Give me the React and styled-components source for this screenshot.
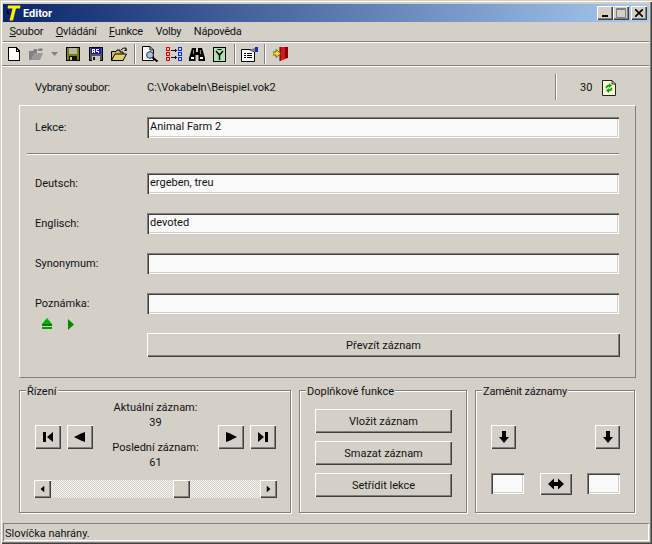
import React from "react";
import styled, { createGlobalStyle } from "styled-components";

const Global = createGlobalStyle`
  html, body { margin: 0; padding: 0; background: #d4d0c8; }
  * { box-sizing: border-box; }
  body { font-family: Roboto, "Liberation Sans", Arial, sans-serif; font-size: 11px; color: #111; }
`;

const FACE = "#d4d0c8";

const Window = styled.div`
  width: 652px;
  height: 544px;
  background: ${FACE};
  display: flex;
  flex-direction: column;
  padding: 4px 3px 3px 3px;
  box-shadow: inset 1px 1px 0 ${FACE}, inset 2px 2px 0 #fff, inset -1px -1px 0 #404040, inset -2px -2px 0 #808080;
`;

const TitleBar = styled.div`
  height: 18px;
  flex: none;
  display: flex;
  align-items: center;
  padding: 0 2px 0 2px;
  background: linear-gradient(90deg, #0a246a, #a6caf0);
  color: #fff;
  font-weight: bold;
  font-size: 11px;
`;

const TitleText = styled.span`
  margin-left: 2px;
  flex: 1;
`;

const CaptionButton = styled.div`
  width: 16px;
  height: 14px;
  margin-left: ${p => p.$gap || 0}px;
  background: ${FACE};
  box-shadow: inset 1px 1px 0 #fff, inset -1px -1px 0 #404040, inset -2px -2px 0 #808080;
  display: flex;
  align-items: center;
  justify-content: center;
`;

const MenuBar = styled.div`
  height: 20px;
  flex: none;
  display: flex;
  align-items: center;
  border-bottom: 1px solid #808080;
`;

const MenuItem = styled.span`
  padding: 0 6px 0 6.5px;
  font-size: 11px;
  letter-spacing: -0.22px;
  u { text-decoration: underline; }
`;

const ToolBar = styled.div`
  height: 24px;
  flex: none;
  display: flex;
  align-items: center;
  margin-left: -1px;
  border-top: 1px solid #fff;
  border-bottom: 1px solid #808080;
  box-shadow: 0 1px 0 #fff;
`;

const ToolButton = styled.div`
  width: ${p => p.$w || 23}px;
  height: 22px;
  flex: none;
  display: flex;
  align-items: center;
  justify-content: center;
`;

const ToolSep = styled.div`
  width: ${p => p.$w}px;
  height: 20px;
  flex: none;
  display: flex;
  justify-content: center;
  &::before {
    content: "";
    width: 2px;
    height: 100%;
    background: linear-gradient(90deg, #808080 50%, #fff 50%);
  }
`;

const Body = styled.div`
  flex: 1;
  display: flex;
  flex-direction: column;
  padding: 0 13px 0 16px;
`;

const InfoRow = styled.div`
  height: 39px;
  flex: none;
  display: flex;
  align-items: center;
  padding-top: 4px;
`;

const InfoLabel = styled.span`
  width: 112px;
  margin-left: 16px;
  letter-spacing: -0.25px;
`;

const InfoPath = styled.span`
  flex: 1;
`;

const InfoDivider = styled.div`
  width: 2px;
  height: 26px;
  margin-top: -2px;
  background: linear-gradient(90deg, #808080 50%, #fff 50%);
`;

const InfoCount = styled.span`
  margin-left: 23px;
  width: 22px;
`;

const InfoIcon = styled.div`
  width: 34px;
  display: flex;
`;

const LessonPanel = styled.div`
  height: 273px;
  flex: none;
  border-top: 1px solid #fff;
  border-left: 1px solid #fff;
  border-right: 1px solid #808080;
  border-bottom: 1px solid #808080;
  padding: 11px 16px 0 15px;
  display: flex;
  flex-direction: column;
`;

const FieldRow = styled.div`
  display: grid;
  grid-template-columns: 112px 1fr;
  align-items: center;
  height: 21px;
  margin-bottom: ${p => p.$mb ?? 19}px;
`;

const TextInput = styled.div`
  height: ${p => p.$h || 21}px;
  width: ${p => p.$w ? p.$w + "px" : "auto"};
  background: #f9f9f9;
  padding: 3px 0 0 3px;
  font-size: 11px;
  box-shadow: inset 1px 1px 0 #808080, inset 2px 2px 0 #404040, inset -1px -1px 0 #fff, inset -2px -2px 0 ${FACE};
`;

const Rule = styled.div`
  height: 2px;
  margin: 15px 0 18px -8px;
  background: linear-gradient(180deg, #808080 50%, #fff 50%);
`;

const MarkerRow = styled.div`
  height: 14px;
  margin-top: -16px;
  display: flex;
  align-items: center;
  gap: 16px;
  padding-left: 7px;
  flex: none;
`;

const Button = styled.div`
  width: ${p => p.$w ? p.$w + "px" : "auto"};
  height: ${p => p.$h || 24}px;
  flex: none;
  background: ${FACE};
  display: flex;
  align-items: center;
  justify-content: center;
  box-shadow: inset 1px 1px 0 #fff, inset -1px -1px 0 #404040, inset -2px -2px 0 #808080;
`;

const WideButtonRow = styled.div`
  margin: 2px -1px 0 112px;
`;

const Groups = styled.div`
  margin-top: 12px;
  display: flex;
  gap: 8px;
  height: 123px;
`;

const Group = styled.div`
  position: relative;
  width: ${p => p.$w}px;
  height: 123px;
  flex: none;
  border: 1px solid #808080;
  box-shadow: 1px 1px 0 #fff, inset 1px 1px 0 #fff;
  padding: ${p => p.$pad};
`;

const Legend = styled.span`
  position: absolute;
  left: 6px;
  top: -6px;
  padding: 0 1px;
  background: ${FACE};
  line-height: 13px;
  letter-spacing: ${p => p.$tight ? "-0.2px" : "0"};
`;

const NavRow = styled.div`
  display: flex;
  align-items: flex-start;
  height: 80px;
`;

const NavPair = styled.div`
  display: flex;
  gap: 6px;
  margin-top: 25px;
`;

const Readout = styled.div`
  flex: 1;
  text-align: center;
  line-height: 15px;
`;

const ReadoutValue = styled.div`
  margin-bottom: 10px;
  &:last-child { margin-bottom: 0; }
`;

const ScrollBar = styled.div`
  height: 18px;
  width: 243px;
  margin-left: -1px;
  display: flex;
  background: repeating-conic-gradient(#f4f3f0 0 25%, ${FACE} 0 50%) 0 0 / 2px 2px;
`;

const ScrollKnob = styled(Button)`
  margin-left: ${p => p.$ml || 0}px;
`;

const Track = styled.div`
  flex: 1;
  display: flex;
`;

const FuncStack = styled.div`
  display: flex;
  flex-direction: column;
  gap: 8px;
`;

const SwapRow = styled.div`
  display: flex;
  justify-content: space-between;
  align-items: flex-start;
  margin-bottom: ${p => p.$mb || 0}px;
`;

const StatusBar = styled.div`
  height: 18px;
  flex: none;
  margin-top: 10px;
  padding: 4px 0 0 2px;
  box-shadow: inset 1px 1px 0 #808080, inset -1px -1px 0 #fff;
  font-size: 11px;
`;

const Logo = () => (
  <svg width="16" height="16" viewBox="0 0 16 16">
    <path d="M2.5 3L4 9H2Z M3 3H2V9" fill="#000" />
    <path d="M3 0.5H15.5L15 3.5H11L8 15.5H4.5L7.5 3.5H2.5Z" fill="#ffef00" />
  </svg>
);

const Px = ({ w, h, children, style }) => (
  <svg width={w} height={h} viewBox={`0 0 ${w} ${h}`} shapeRendering="crispEdges" style={style}>{children}</svg>
);

const NewIcon = () => (
  <Px w={12} h={14}>
    <path d="M.5.5H8L11.5 4V13.5H.5Z" fill="#fff" stroke="#000" />
    <path d="M8 .5V4H11.5" fill="none" stroke="#000" />
  </Px>
);

const OpenGreyIcon = () => (
  <svg width="17" height="14" viewBox="0 0 17 14">
    <path d="M1 4H5L6 2H9V13H1Z" fill="#808080" />
    <path d="M3 13L6 6H15L12 13Z" fill="#9a9a9a" />
    <path d="M9 3Q12 0 15 2L14 4H11Z" fill="#808080" />
  </svg>
);

const Caret = ({ color = "#808080", rotate = 0 }) => (
  <svg width="7" height="4" viewBox="0 0 7 4" style={rotate ? { transform: `rotate(${rotate}deg)` } : undefined}>
    <path d="M0 0H7L3.5 4Z" fill={color} />
  </svg>
);

const SaveIcon = () => (
  <Px w={14} h={14}>
    <rect width="14" height="14" fill="#000" />
    <rect x="1" y="1" width="12" height="12" fill="#808000" />
    <rect x="3" y="1" width="8" height="6" fill="#b8b8a8" />
    <rect x="3" y="9" width="8" height="5" fill="#111" />
    <rect x="4" y="10" width="2" height="3" fill="#c8c8c0" />
  </Px>
);

const SaveAsIcon = () => (
  <Px w={14} h={14}>
    <rect width="14" height="14" fill="#000" />
    <rect x="1" y="1" width="12" height="12" fill="#555" />
    <rect x="2" y="1" width="10" height="6" fill="#1818d0" />
    <rect x="3" y="2" width="1" height="4" fill="#fff" />
    <rect x="5" y="2" width="1" height="4" fill="#fff" />
    <rect x="4" y="2" width="1" height="1" fill="#fff" />
    <rect x="4" y="4" width="1" height="1" fill="#fff" />
    <rect x="7" y="2" width="3" height="1" fill="#fff" />
    <rect x="7" y="3" width="1" height="1" fill="#fff" />
    <rect x="7" y="4" width="3" height="1" fill="#fff" />
    <rect x="9" y="5" width="1" height="1" fill="#fff" />
    <rect x="3" y="9" width="8" height="5" fill="#c8c8c0" />
    <rect x="4" y="10" width="2" height="3" fill="#111" />
  </Px>
);

const FolderIcon = () => (
  <svg width="16" height="14" viewBox="0 0 16 14">
    <path d="M.5 4.5H5L6 3H9V5H12V13.5H.5Z" fill="#c8b860" stroke="#000" />
    <path d="M.5 13.5L4 7H15.5L12 13.5Z" fill="#ded26a" stroke="#000" />
    <path d="M10 3Q12 .5 15 1V4" fill="none" stroke="#000" />
    <path d="M12.5 4H15.5V2Z" fill="#000" />
  </svg>
);

const PreviewIcon = () => (
  <svg width="17" height="16" viewBox="0 0 17 16">
    <path d="M.5.5H8L11.5 4V14.5H.5Z" fill="#fff" stroke="#000" />
    <path d="M8 .5V4H11.5" fill="none" stroke="#000" />
    <circle cx="8" cy="9" r="3.4" fill="#9cc8e8" stroke="#333" />
    <path d="M10.5 11.5L15.5 15.5" stroke="#000" strokeWidth="2" />
  </svg>
);

const MapIcon = () => (
  <Px w={16} h={15}>
    {[0, 5, 10].map(y => (
      <g key={y}>
        <rect x="0" y={y} width="4" height="4" fill="#f00000" />
        <rect x="1" y={y + 1} width="2" height="2" fill="#ffc8c8" />
        <rect x="12" y={y} width="4" height="4" fill="#0030f0" />
        <rect x="13" y={y + 1} width="2" height="2" fill="#c8d8ff" />
      </g>
    ))}
    <path d="M5 3H9V1L11 3.5L9 6V4H5Z M5 10H9V8L11 10.5L9 13V11H5Z" fill="#111" />
  </Px>
);

const BinocularsIcon = () => (
  <svg width="16" height="14" viewBox="0 0 16 14">
    <path d="M3 1H7V5H9V1H13L16 11V14H9.5V8H6.5V14H0V11Z" fill="#000" />
    <rect x="2" y="10" width="3" height="2" fill="#fff" />
    <rect x="11" y="10" width="3" height="2" fill="#fff" />
    <rect x="4" y="3" width="1" height="4" fill="#888" />
    <rect x="11" y="3" width="1" height="4" fill="#888" />
  </svg>
);

const FilterIcon = () => (
  <svg width="13" height="15" viewBox="0 0 13 15">
    <rect x=".5" y=".5" width="12" height="14" fill="#b0e0b0" stroke="#000" />
    <path d="M3 4L6.5 8L10 4M6.5 8V13" fill="none" stroke="#000" strokeWidth="1.5" />
    <path d="M4.5 2.5H8.5" stroke="#000" />
  </svg>
);

const PropsIcon = () => (
  <svg width="17" height="15" viewBox="0 0 17 15">
    <path d="M.5 2.5H10L13.5 5V14.5H.5Z" fill="#fff" stroke="#000" />
    <path d="M3 6H5V7H3ZM6 6H11V7H6ZM3 8H5V9H3ZM6 8H11V9H6ZM3 10H5V11H3ZM6 10H11V11H6Z" fill="#000" />
    <path d="M8 3L14 1V4L11 5Z" fill="#808080" />
    <rect x="14" y="0" width="3" height="5" fill="#1830a8" />
  </svg>
);

const ExitIcon = () => (
  <svg width="15" height="16" viewBox="0 0 15 16">
    <path d="M7 1H15V12L7 15Z" fill="#d81818" />
    <path d="M12 1H15V12H12Z" fill="#900000" />
    <path d="M7 1V15" stroke="#400000" />
    <path d="M0 6H3V3.5L8 7.5L3 11.5V9H0Z" fill="#ffe000" stroke="#222" strokeWidth=".6" />
  </svg>
);

const RefreshIcon = () => (
  <svg width="14" height="16" viewBox="0 0 14 16">
    <path d="M.5.5H10L13.5 4V15.5H.5Z" fill="#fbfbd8" stroke="#222" />
    <path d="M10 .5V4H13.5" fill="none" stroke="#222" />
    <path d="M3.5 8Q3.5 5 7 4.5V3L10 5.5L7 8V6.5Q5 7 5 8.5Z" fill="#12a012" />
    <path d="M10.5 8Q10.5 11 7 11.5V13L4 10.5L7 8V9.5Q9 9 9 7.5Z" fill="#12a012" />
  </svg>
);

const EjectGreen = () => (
  <Px w={10} h={12}>
    <path d="M5 0L10 6H0Z" fill="#00b000" shapeRendering="auto" />
    <rect x="0" y="6" width="10" height="2" fill="#008000" />
    <rect x="0" y="9" width="10" height="2" fill="#00a000" />
  </Px>
);

const PlayGreen = () => (
  <svg width="6" height="11" viewBox="0 0 6 11"><path d="M0 0L6 5.5L0 11Z" fill="#008c00" /></svg>
);

const Glyph = ({ d, w = 12, h = 10 }) => (
  <svg width={w} height={h} viewBox={`0 0 ${w} ${h}`}><path d={d} fill="#000" /></svg>
);

const FIRST = "M1 0H4V10H1ZM11 0V10L5 5Z";
const PREV = "M0 5L7 1.5L11 0V10L7 8.5Z";
const NEXT = "M1 0L5 1.5L12 5L5 8.5L1 10Z";
const LAST = "M1 0V10L7 5ZM8 0H11V10H8Z";
const DOWN = "M4 0H8V6H11L6 12L1 6H4Z";
const SWAP = "M0 6L6 .5V4H10V.5L16 6L10 11.5V8H6V11.5Z";

export default function App() {
  return (
    <Window>
      <Global />
      <TitleBar>
        <Logo />
        <TitleText>Editor</TitleText>
        <CaptionButton>
          <svg width="8" height="8"><rect x="1" y="6" width="6" height="2" fill="#000" /></svg>
        </CaptionButton>
        <CaptionButton>
          <svg width="10" height="10"><path d="M.5.5H9.5V9.5H.5Z" fill="none" stroke="#808080" /><rect x="1" y="1" width="8" height="1" fill="#808080" /></svg>
        </CaptionButton>
        <CaptionButton $gap={2}>
          <svg width="8" height="8"><path d="M0 0L8 8M8 0L0 8" stroke="#000" strokeWidth="1.6" /></svg>
        </CaptionButton>
      </TitleBar>
      <MenuBar>
        <MenuItem><u>S</u>oubor</MenuItem>
        <MenuItem><u>O</u>vládání</MenuItem>
        <MenuItem><u>F</u>unkce</MenuItem>
        <MenuItem>Volby</MenuItem>
        <MenuItem>Nápověda</MenuItem>
      </MenuBar>
      <ToolBar>
        <ToolButton><NewIcon /></ToolButton>
        <ToolButton><OpenGreyIcon /></ToolButton>
        <ToolButton $w={13}><Caret /></ToolButton>
        <ToolButton><SaveIcon /></ToolButton>
        <ToolButton><SaveAsIcon /></ToolButton>
        <ToolButton><FolderIcon /></ToolButton>
        <ToolSep $w={9} />
        <ToolButton><PreviewIcon /></ToolButton>
        <ToolButton><MapIcon /></ToolButton>
        <ToolButton><BinocularsIcon /></ToolButton>
        <ToolButton><FilterIcon /></ToolButton>
        <ToolSep $w={7} />
        <ToolButton><PropsIcon /></ToolButton>
        <ToolSep $w={8} />
        <ToolButton><ExitIcon /></ToolButton>
      </ToolBar>
      <Body>
        <InfoRow>
          <InfoLabel>Vybraný soubor:</InfoLabel>
          <InfoPath>C:\Vokabeln\Beispiel.vok2</InfoPath>
          <InfoDivider />
          <InfoCount>30</InfoCount>
          <InfoIcon><RefreshIcon /></InfoIcon>
        </InfoRow>
        <LessonPanel>
          <FieldRow $mb={0}><span>Lekce:</span><TextInput>Animal Farm 2</TextInput></FieldRow>
          <Rule />
          <FieldRow><span>Deutsch:</span><TextInput>ergeben, treu</TextInput></FieldRow>
          <FieldRow><span>Englisch:</span><TextInput>devoted</TextInput></FieldRow>
          <FieldRow><span>Synonymum:</span><TextInput /></FieldRow>
          <FieldRow><span>Poznámka:</span><TextInput /></FieldRow>
          <MarkerRow><EjectGreen /><PlayGreen /></MarkerRow>
          <WideButtonRow><Button>Převzít záznam</Button></WideButtonRow>
        </LessonPanel>
        <Groups>
          <Group $w={272} $pad="9px 14px 0 15px">
            <Legend>Řízení</Legend>
            <NavRow>
              <NavPair>
                <Button $w={26}><Glyph d={FIRST} /></Button>
                <Button $w={26}><Glyph d={PREV} /></Button>
              </NavPair>
              <Readout>
                <div>Aktuální záznam:</div>
                <ReadoutValue>39</ReadoutValue>
                <div>Poslední záznam:</div>
                <ReadoutValue>61</ReadoutValue>
              </Readout>
              <NavPair>
                <Button $w={26}><Glyph d={NEXT} /></Button>
                <Button $w={26}><Glyph d={LAST} /></Button>
              </NavPair>
            </NavRow>
            <ScrollBar>
              <Button $w={17} $h={18}><Caret color="#000" rotate={90} /></Button>
              <Track>
                <ScrollKnob $w={17} $h={18} $ml={122} />
              </Track>
              <Button $w={17} $h={18}><Caret color="#000" rotate={-90} /></Button>
            </ScrollBar>
          </Group>
          <Group $w={168} $pad="18px 15px 0 15px">
            <Legend>Doplňkové funkce</Legend>
            <FuncStack>
              <Button $w={137}>Vložit záznam</Button>
              <Button $w={137}>Smazat záznam</Button>
              <Button $w={137}>Setřídit lekce</Button>
            </FuncStack>
          </Group>
          <Group $w={160} $pad="34px 14px 0 15px">
            <Legend $tight>Zaměnit záznamy</Legend>
            <SwapRow $mb={24}>
              <Button $w={25}><Glyph d={DOWN} w={12} h={12} /></Button>
              <Button $w={25}><Glyph d={DOWN} w={12} h={12} /></Button>
            </SwapRow>
            <SwapRow>
              <TextInput $w={33} />
              <Button $w={32} $h={22}><Glyph d={SWAP} w={16} h={12} /></Button>
              <TextInput $w={33} />
            </SwapRow>
          </Group>
        </Groups>
      </Body>
      <StatusBar>Slovíčka nahrány.</StatusBar>
    </Window>
  );
}
